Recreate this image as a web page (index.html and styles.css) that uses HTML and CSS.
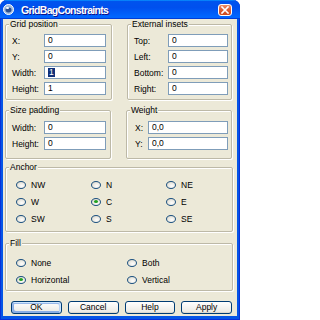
FILE: index.html
```html
<!DOCTYPE html>
<html>
<head>
<meta charset="utf-8">
<link rel="stylesheet" href="styles.css">
</head>
<body>
<div class="window">
  <div class="titlebar">
    <svg class="app-icon" width="11" height="11" viewBox="0 0 11 11">
      <circle cx="5.5" cy="5.5" r="5" fill="#9fb9dc" stroke="#ffffff" stroke-width="1"/>
      <ellipse cx="5.5" cy="6" rx="3" ry="2.4" fill="#2a4f92"/>
      <ellipse cx="4.5" cy="4" rx="1.6" ry="1" fill="#ffffff"/>
    </svg>
    <span class="title">GridBagConstraints</span>
    <span class="close">
      <svg width="12" height="10" viewBox="0 0 12 10">
        <path d="M3 2 L9 8 M9 2 L3 8" stroke="#ffffff" stroke-width="1.6" stroke-linecap="square"/>
      </svg>
    </span>
  </div>
  <div class="content">
    <div class="row row1">
      <div class="group g-grid">
        <span class="gtitle">Grid position</span>
        <div class="frow"><span class="lbl">X:</span><span class="input">0</span></div>
        <div class="frow"><span class="lbl">Y:</span><span class="input">0</span></div>
        <div class="frow"><span class="lbl">Width:</span><span class="input"><span class="sel">1</span></span></div>
        <div class="frow"><span class="lbl">Height:</span><span class="input">1</span></div>
      </div>
      <div class="group g-ext">
        <span class="gtitle">External insets</span>
        <div class="frow"><span class="lbl">Top:</span><span class="input">0</span></div>
        <div class="frow"><span class="lbl">Left:</span><span class="input">0</span></div>
        <div class="frow"><span class="lbl">Bottom:</span><span class="input">0</span></div>
        <div class="frow"><span class="lbl">Right:</span><span class="input">0</span></div>
      </div>
    </div>
    <div class="row row2">
      <div class="group g-size">
        <span class="gtitle">Size padding</span>
        <div class="frow"><span class="lbl">Width:</span><span class="input">0</span></div>
        <div class="frow"><span class="lbl">Height:</span><span class="input">0</span></div>
      </div>
      <div class="group g-weight">
        <span class="gtitle">Weight</span>
        <div class="frow"><span class="lbl">X:</span><span class="input">0,0</span></div>
        <div class="frow"><span class="lbl">Y:</span><span class="input">0,0</span></div>
      </div>
    </div>
    <div class="group g-anchor">
      <span class="gtitle">Anchor</span>
      <div class="opt"><span class="radio"></span>NW</div>
      <div class="opt"><span class="radio"></span>N</div>
      <div class="opt"><span class="radio"></span>NE</div>
      <div class="opt"><span class="radio"></span>W</div>
      <div class="opt"><span class="radio on"></span>C</div>
      <div class="opt"><span class="radio"></span>E</div>
      <div class="opt"><span class="radio"></span>SW</div>
      <div class="opt"><span class="radio"></span>S</div>
      <div class="opt"><span class="radio"></span>SE</div>
    </div>
    <div class="group g-fill">
      <span class="gtitle">Fill</span>
      <div class="opt"><span class="radio"></span>None</div>
      <div class="opt"><span class="radio"></span>Both</div>
      <div class="opt"><span class="radio on"></span>Horizontal</div>
      <div class="opt"><span class="radio"></span>Vertical</div>
    </div>
    <div class="buttons">
      <span class="btn default">OK</span>
      <span class="btn">Cancel</span>
      <span class="btn">Help</span>
      <span class="btn">Apply</span>
    </div>
  </div>
</div>
</body>
</html>
```
FILE: styles.css
```css
html, body {
  margin: 0;
  padding: 0;
  background: #ffffff;
}
body {
  font-family: "Liberation Sans", Arial, sans-serif;
  font-size: 8.5px;
  color: #000;
}
.window {
  width: 240px;
  height: 320px;
  box-sizing: border-box;
  display: flex;
  flex-direction: column;
  background: #0555e6;
  box-shadow: inset 1px 0 #0831d9, inset -1px 0 #0831d9, inset 0 -1px #0831d9;
  padding: 0 3px 4px 3px;
  border-radius: 7px 7px 0 0;
  overflow: hidden;
}
.titlebar {
  height: 19px;
  margin: 0 -3px;
  flex: none;
  display: flex;
  align-items: center;
  background: linear-gradient(180deg, #0997ff, #0053ee 8%, #0050ee 40%, #0066ff 88%, #0066ff 93%, #005bff 95%, #003dd7 96%, #003dd7);
  border-radius: 7px 7px 0 0;
}
.app-icon {
  margin-left: 3px;
  flex: none;
}
.title {
  margin-left: 7px;
  color: #fff;
  font-weight: bold;
  font-size: 10.5px;
  letter-spacing: -0.7px;
  line-height: 12px;
  text-shadow: 1px 1px #0f1089;
}
.close {
  margin-left: auto;
  margin-right: 8px;
  width: 14px;
  height: 12px;
  box-sizing: border-box;
  border: 1px solid #fff;
  border-radius: 3px;
  background: linear-gradient(180deg, #eb8f6a, #dd5b32 50%, #cc4a1e);
  display: flex;
  align-items: center;
  justify-content: center;
}
.content {
  flex: 1;
  background: #ece9d8;
  padding: 5px 0 2px 2px;
  display: flex;
  flex-direction: column;
}
.row {
  display: flex;
  gap: 15px;
}
.row2 {
  margin-top: 10px;
}
.group {
  position: relative;
  box-sizing: border-box;
  border: 1px solid #bdb9a7;
  border-radius: 2px;
  box-shadow: 1px 1px 0 #fff, inset 1px 1px 0 #fff;
  display: flex;
  flex-direction: column;
  gap: 3px;
}
.gtitle {
  position: absolute;
  top: -5px;
  left: 3px;
  padding: 0 1px;
  background: #ece9d8;
  line-height: 9px;
  white-space: nowrap;
}
.frow {
  display: flex;
  align-items: center;
  height: 13px;
}
.lbl {
  flex: none;
  line-height: 10px;
}
.input {
  flex: none;
  height: 13px;
  box-sizing: border-box;
  border: 1px solid #7f9db9;
  background: #fff;
  padding-left: 3px;
  line-height: 11px;
  display: flex;
  align-items: center;
}
.sel {
  background: #10307a;
  color: #fff;
  padding: 0 1px;
  line-height: 9px;
}
.g-grid {
  width: 107px;
  height: 76px;
  padding: 9px 5px 4px 6px;
}
.g-grid .lbl { width: 32px; }
.g-grid .input { width: 62px; }
.g-ext {
  width: 105px;
  height: 76px;
  padding: 9px 3px 4px 6px;
}
.g-ext .lbl { width: 34px; }
.g-ext .input { width: 60px; }
.g-size {
  width: 106px;
  height: 49px;
  padding: 10px 4px 8px 6px;
}
.g-size .lbl { width: 32px; }
.g-size .input { width: 62px; }
.g-weight {
  width: 106px;
  height: 49px;
  padding: 10px 3px 8px 8px;
}
.g-weight .lbl { width: 13px; }
.g-weight .input { width: 80px; }
.g-anchor {
  margin-top: 8px;
  width: 228px;
  height: 65px;
  padding: 8px 0 4px 10px;
  display: grid;
  grid-template-columns: 75px 75px 1fr;
  grid-auto-rows: 17px;
  gap: 0;
}
.g-fill {
  margin-top: 11px;
  width: 228px;
  height: 48px;
  padding: 10px 0 2px 10px;
  display: grid;
  grid-template-columns: 111px 1fr;
  grid-auto-rows: 17px;
  gap: 0;
}
.opt {
  display: flex;
  align-items: center;
  gap: 5px;
  line-height: 10px;
}
.radio {
  position: relative;
  flex: none;
  width: 10px;
  height: 8px;
  box-sizing: border-box;
  border: 1px solid #1c5180;
  border-radius: 50%;
  background: radial-gradient(ellipse at 60% 65%, #ffffff 0, #e9e7df 55%, #c9c6ba 100%);
}
.radio.on::after {
  content: "";
  position: absolute;
  left: 2px;
  top: 1.5px;
  width: 4px;
  height: 3px;
  border-radius: 50%;
  background: #21a121;
}
.buttons {
  margin-top: 10px;
  padding: 0 5px 0 6px;
  display: grid;
  grid-template-columns: repeat(4, 1fr);
  gap: 6px;
}
.btn {
  height: 13px;
  box-sizing: border-box;
  border: 1px solid #003c74;
  border-radius: 3px;
  background: linear-gradient(180deg, #ffffff, #ecebe6 86%, #d6d0c5);
  text-align: center;
  line-height: 11px;
}
.btn.default {
  box-shadow: inset -1px 1px #cee7ff, inset 1px 2px #98b8ea, inset -2px 2px #bcd4f6, inset 1px -1px #89ade4, inset 2px -2px #89ade4;
}
```
